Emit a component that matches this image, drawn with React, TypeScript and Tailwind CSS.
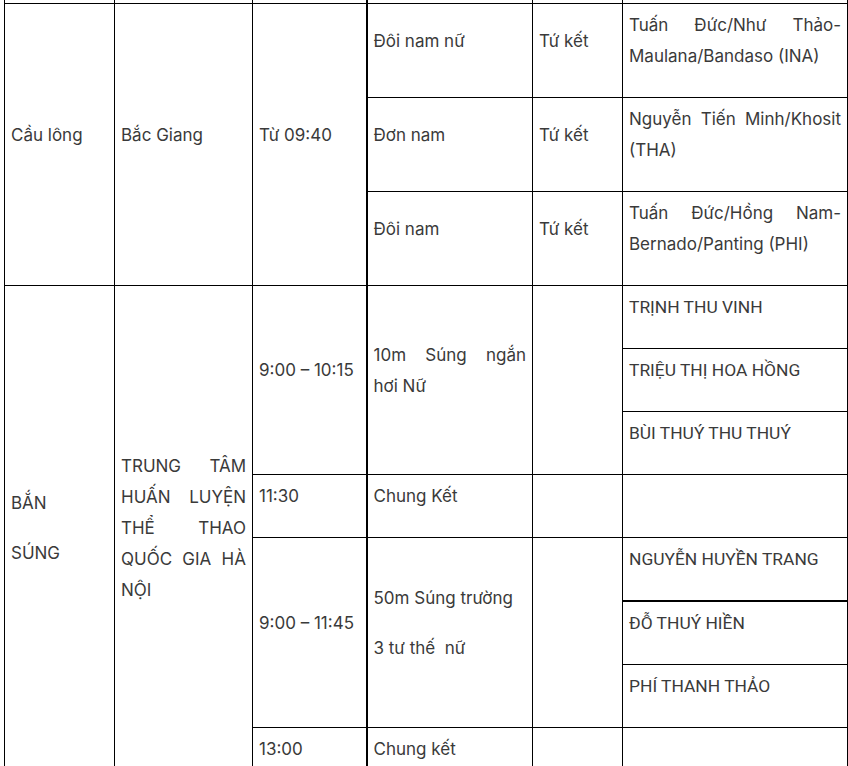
import React from "react"

const cell = "border border-black px-[6px] py-[6px] align-middle text-justify"
const name = "font-['Roboto'] text-[17.4px]"

function P({ children, className = "" }: { children?: React.ReactNode; className?: string }) {
  return <p className={"mb-[19px] " + className}>{children}</p>
}

export default function App() {
  return (
    <div className="h-[766px] overflow-hidden bg-white">
      <table
        className="ml-1 -mt-[20px] w-[843px] table-fixed border-collapse text-[17px] leading-[31px] text-[#3a3a3a]"
        style={{ fontFamily: "Inter, 'Noto Sans', sans-serif" }}
      >
        <colgroup>
          <col className="w-[110px]" />
          <col className="w-[138px]" />
          <col className="w-[114px]" />
          <col className="w-[166px]" />
          <col className="w-[90px]" />
          <col className="w-[225px]" />
        </colgroup>
        <tbody>
          {/* cut-off row from above */}
          <tr className="h-[23px]">
            <td className="border border-black p-0" />
            <td className="border border-black p-0" />
            <td className="border border-black p-0" />
            <td className="border border-black border-l-2 p-0" />
            <td className="border border-black p-0" />
            <td className="border border-black p-0" />
          </tr>

          {/* Cầu lông */}
          <tr>
            <td rowSpan={3} className={cell}>
              <P>Cầu lông</P>
            </td>
            <td rowSpan={3} className={cell}>
              <P>Bắc Giang</P>
            </td>
            <td rowSpan={3} className={cell}>
              <P>Từ 09:40</P>
            </td>
            <td className={cell + " border-l-2"}>
              <P>Đôi nam nữ</P>
            </td>
            <td className={cell}>
              <P>Tứ kết</P>
            </td>
            <td className={cell}>
              <P>Tuấn Đức/Như Thảo-Maulana/Bandaso (INA)</P>
            </td>
          </tr>
          <tr>
            <td className={cell + " border-l-2"}>
              <P>Đơn nam</P>
            </td>
            <td className={cell}>
              <P>Tứ kết</P>
            </td>
            <td className={cell}>
              <P>Nguyễn Tiến Minh/Khosit (THA)</P>
            </td>
          </tr>
          <tr>
            <td className={cell + " border-l-2"}>
              <P>Đôi nam</P>
            </td>
            <td className={cell}>
              <P>Tứ kết</P>
            </td>
            <td className={cell}>
              <P>Tuấn Đức/Hồng Nam-Bernado/Panting (PHI)</P>
            </td>
          </tr>

          {/* Bắn súng */}
          <tr>
            <td rowSpan={8} className={cell}>
              <P>BẮN</P>
              <P>SÚNG</P>
            </td>
            <td rowSpan={8} className={cell}>
              <P>TRUNG TÂM HUẤN LUYỆN THỂ THAO QUỐC GIA HÀ NỘI</P>
            </td>
            <td rowSpan={3} className={cell}>
              <P>9:00 – 10:15</P>
            </td>
            <td rowSpan={3} className={cell + " border-l-2"}>
              <P>10m Súng ngắn hơi Nữ</P>
            </td>
            <td rowSpan={3} className={cell} />
            <td className={cell}>
              <P className={name}>TRỊNH THU VINH</P>
            </td>
          </tr>
          <tr>
            <td className={cell}>
              <P className={name}>TRIỆU THỊ HOA HỒNG</P>
            </td>
          </tr>
          <tr>
            <td className={cell}>
              <P className={name}>BÙI THUÝ THU THUÝ</P>
            </td>
          </tr>
          <tr>
            <td className={cell}>
              <P>11:30</P>
            </td>
            <td className={cell + " border-l-2"}>
              <P>Chung Kết</P>
            </td>
            <td className={cell} />
            <td className={cell} />
          </tr>
          <tr>
            <td rowSpan={3} className={cell}>
              <P>9:00 – 11:45</P>
            </td>
            <td rowSpan={3} className={cell + " border-l-2"}>
              <P>50m Súng trường</P>
              <P>3 tư thế&nbsp; nữ</P>
            </td>
            <td rowSpan={3} className={cell} />
            <td className={cell}>
              <P className={name}>NGUYỄN HUYỀN TRANG</P>
            </td>
          </tr>
          <tr>
            <td className={cell + " border-t-2"}>
              <P className={name}>ĐỖ THUÝ HIỀN</P>
            </td>
          </tr>
          <tr>
            <td className={cell}>
              <P className={name}>PHÍ THANH THẢO</P>
            </td>
          </tr>
          <tr>
            <td className={cell}>
              <P>13:00</P>
            </td>
            <td className={cell + " border-l-2"}>
              <P>Chung kết</P>
            </td>
            <td className={cell} />
            <td className={cell} />
          </tr>
        </tbody>
      </table>
    </div>
  )
}
